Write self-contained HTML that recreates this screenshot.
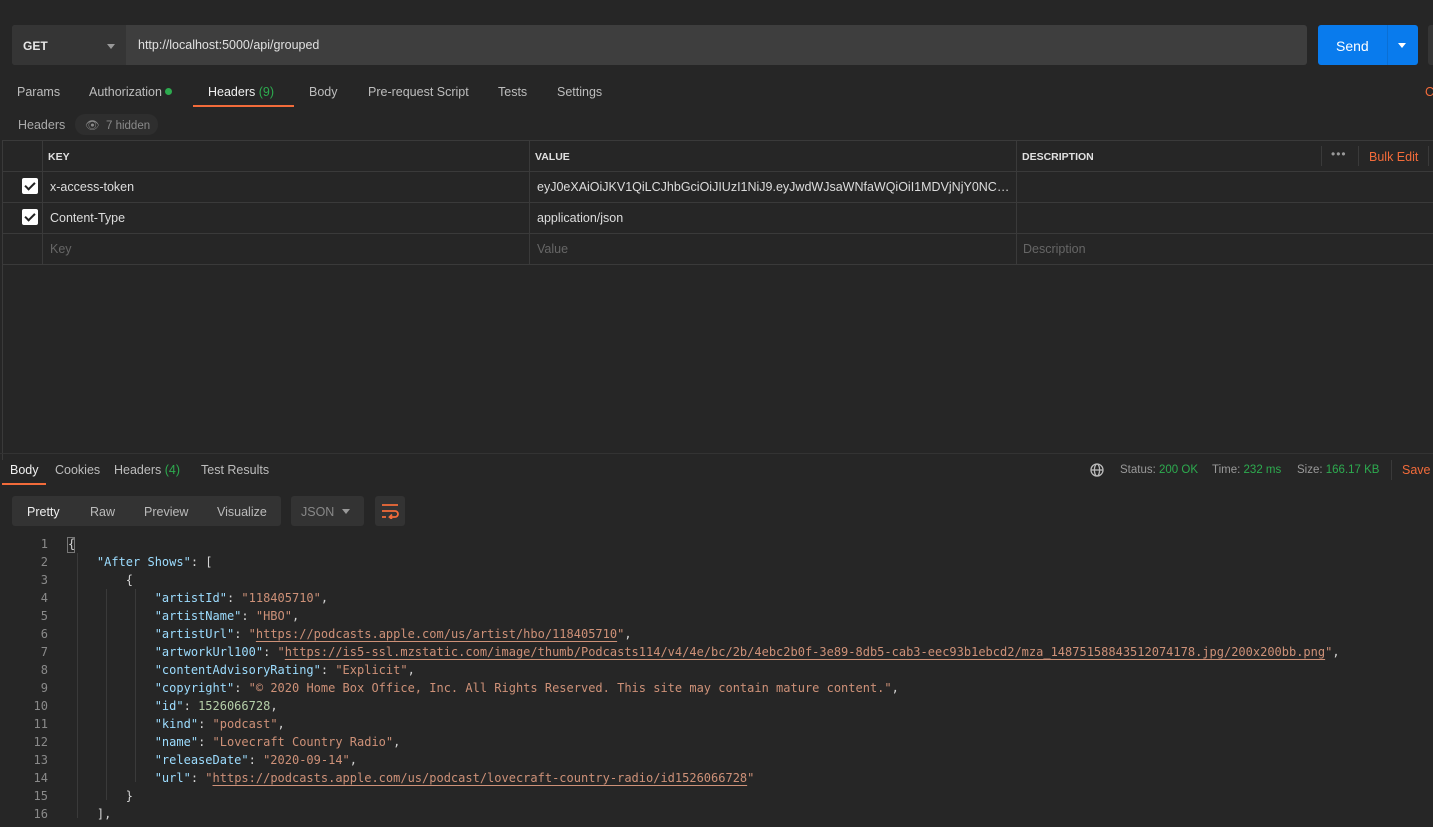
<!DOCTYPE html>
<html><head><meta charset="utf-8"><style>
*{box-sizing:border-box;margin:0;padding:0}
body{width:1433px;height:827px;background:#262626;font-family:"Liberation Sans",sans-serif;color:#d0d0d0;position:relative;overflow:hidden;font-size:12px}
.a{position:absolute;white-space:nowrap}
.hl{position:absolute;background:#3a3a3a;height:1px}
.vl{position:absolute;background:#3a3a3a;width:1px}
.code{position:absolute;left:0;top:535px;font-family:"DejaVu Sans Mono","Liberation Mono",monospace;font-size:12px;line-height:18px}
.ln{position:absolute;width:48px;text-align:right;color:#8a8a8a}
.cl{position:absolute;left:68px;white-space:pre;color:#d4d4d4}
.k{color:#9cdcfe}.s{color:#ce9178}.n{color:#b5cea8}
.u{text-decoration:underline;text-underline-offset:3px}
.chk{position:absolute;left:22px;width:16px;height:16px;background:#fff;border-radius:2px}
.chk:after{content:"";position:absolute;left:5px;top:2px;width:4px;height:8px;border:solid #222;border-width:0 2px 2px 0;transform:rotate(45deg)}
</style></head><body>
<div class="a" style="left:12px;top:25px;width:1295px;height:40px;background:#3e3e3e;border-radius:3px"></div>
<div class="a" style="left:12px;top:25px;width:114px;height:40px;background:#353535;border-radius:3px 0 0 3px"></div>
<div class="a" style="left:23px;top:39px;font-weight:bold;color:#e8e8e8;font-size:12px">GET</div>
<div class="a" style="left:107px;top:44px;border:4px solid transparent;border-top:5px solid #999"></div>
<div class="a" style="left:138px;top:38px;color:#e0e0e0;font-size:12.5px">http://localhost:5000/api/grouped</div>
<div class="a" style="left:1318px;top:25px;width:100px;height:40px;background:#097bed;border-radius:3px"></div>
<div class="a" style="left:1387px;top:25px;width:1px;height:40px;background:#0a6fd4"></div>
<div class="a" style="left:1336px;top:38px;color:#fff;font-size:14px">Send</div>
<div class="a" style="left:1398px;top:43px;border:4px solid transparent;border-top:5px solid #fff"></div>
<div class="a" style="left:1428px;top:25px;width:5px;height:40px;background:#353535;border-radius:3px 0 0 3px"></div>
<div class="a" style="left:17px;top:85px;color:#bdbdbd;font-size:12.5px">Params</div>
<div class="a" style="left:89px;top:85px;color:#bdbdbd;font-size:12.5px">Authorization <span style="display:inline-block;width:7px;height:7px;border-radius:50%;background:#2dab4f;vertical-align:1px"></span></div>
<div class="a" style="left:208px;top:85px;color:#f0f0f0;font-size:12.5px">Headers <span style="color:#2dab4f">(9)</span></div>
<div class="a" style="left:193px;top:105px;width:101px;height:2px;background:#f26b3a"></div>
<div class="a" style="left:309px;top:85px;color:#bdbdbd;font-size:12.5px">Body</div>
<div class="a" style="left:368px;top:85px;color:#bdbdbd;font-size:12.5px">Pre-request Script</div>
<div class="a" style="left:498px;top:85px;color:#bdbdbd;font-size:12.5px">Tests</div>
<div class="a" style="left:557px;top:85px;color:#bdbdbd;font-size:12.5px">Settings</div>
<div class="a" style="left:1425px;top:85px;color:#f26b3a;font-size:12.5px">C</div>
<div class="a" style="left:18px;top:118px;color:#aaa;font-size:12.5px">Headers</div>
<div class="a" style="left:75px;top:114px;width:83px;height:21px;background:#2e2e2e;border-radius:10px"></div>
<div class="a" style="left:85px;top:118px;color:#8a8a8a;font-size:11.5px">👁&nbsp; 7 hidden</div>
<div class="hl" style="left:2px;top:140px;width:1431px"></div>
<div class="hl" style="left:2px;top:171px;width:1431px"></div>
<div class="hl" style="left:2px;top:202px;width:1431px"></div>
<div class="hl" style="left:2px;top:233px;width:1431px"></div>
<div class="hl" style="left:2px;top:264px;width:1431px"></div>
<div class="vl" style="left:2px;top:140px;height:320px"></div>
<div class="vl" style="left:42px;top:140px;height:124px"></div>
<div class="vl" style="left:529px;top:140px;height:124px"></div>
<div class="vl" style="left:1016px;top:140px;height:124px"></div>
<div class="vl" style="left:1321px;top:146px;height:20px"></div>
<div class="vl" style="left:1358px;top:146px;height:20px"></div>
<div class="vl" style="left:1428px;top:146px;height:20px"></div>
<div class="a" style="left:48px;top:151px;font-weight:bold;font-size:10.5px;color:#e0e0e0">KEY</div>
<div class="a" style="left:535px;top:151px;font-weight:bold;font-size:10.5px;color:#e0e0e0">VALUE</div>
<div class="a" style="left:1022px;top:151px;font-weight:bold;font-size:10.5px;color:#e0e0e0">DESCRIPTION</div>
<div class="a" style="left:1331px;top:147px;color:#999;font-size:12px;letter-spacing:1px">•••</div>
<div class="a" style="left:1369px;top:150px;color:#f26b3a;font-size:12.5px">Bulk Edit</div>
<div class="chk" style="top:178px"></div>
<div class="chk" style="top:209px"></div>
<div class="a" style="left:50px;top:180px;color:#ddd;font-size:12.5px">x-access-token</div>
<div class="a" style="left:537px;top:180px;color:#ddd;font-size:12.5px;width:475px;overflow:hidden;text-overflow:ellipsis">eyJ0eXAiOiJKV1QiLCJhbGciOiJIUzI1NiJ9.eyJwdWJsaWNfaWQiOiI1MDVjNjY0NC1jYzNhNmQ</div>
<div class="a" style="left:50px;top:211px;color:#ddd;font-size:12.5px">Content-Type</div>
<div class="a" style="left:537px;top:211px;color:#ddd;font-size:12.5px">application/json</div>
<div class="a" style="left:50px;top:242px;color:#666;font-size:12.5px">Key</div>
<div class="a" style="left:537px;top:242px;color:#666;font-size:12.5px">Value</div>
<div class="a" style="left:1023px;top:242px;color:#666;font-size:12.5px">Description</div>
<div class="hl" style="left:0;top:453px;width:1433px;background:#333"></div>
<div class="a" style="left:10px;top:463px;color:#f0f0f0;font-size:12.5px">Body</div>
<div class="a" style="left:2px;top:483px;width:44px;height:2px;background:#f26b3a"></div>
<div class="a" style="left:55px;top:463px;color:#bdbdbd;font-size:12.5px">Cookies</div>
<div class="a" style="left:114px;top:463px;color:#bdbdbd;font-size:12.5px">Headers <span style="color:#2dab4f">(4)</span></div>
<div class="a" style="left:201px;top:463px;color:#bdbdbd;font-size:12.5px">Test Results</div>
<svg class="a" style="left:1090px;top:463px" width="14" height="14" viewBox="0 0 14 14" fill="none" stroke="#bbb" stroke-width="1.3"><circle cx="7" cy="7" r="6"/><ellipse cx="7" cy="7" rx="2.6" ry="6"/><path d="M1 7h12"/></svg>
<div class="a" style="left:1120px;top:464px;font-size:11.5px;color:#999">Status: <span style="color:#2dab4f">200 OK</span></div>
<div class="a" style="left:1212px;top:464px;font-size:11.5px;color:#999">Time: <span style="color:#2dab4f">232 ms</span></div>
<div class="a" style="left:1297px;top:464px;font-size:11.5px;color:#999">Size: <span style="color:#2dab4f">166.17 KB</span></div>
<div class="vl" style="left:1391px;top:460px;height:20px"></div>
<div class="a" style="left:1402px;top:463px;color:#f26b3a;font-size:12.5px">Save</div>
<div class="a" style="left:12px;top:496px;width:269px;height:30px;background:#333;border-radius:3px"></div>
<div class="a" style="left:27px;top:505px;color:#eee;font-size:12.5px">Pretty</div>
<div class="a" style="left:90px;top:505px;color:#bbb;font-size:12.5px">Raw</div>
<div class="a" style="left:144px;top:505px;color:#bbb;font-size:12.5px">Preview</div>
<div class="a" style="left:217px;top:505px;color:#bbb;font-size:12.5px">Visualize</div>
<div class="a" style="left:291px;top:496px;width:73px;height:30px;background:#333;border-radius:3px"></div>
<div class="a" style="left:301px;top:505px;color:#888;font-size:12.5px">JSON</div>
<div class="a" style="left:342px;top:509px;border:4px solid transparent;border-top:5px solid #999"></div>
<div class="a" style="left:375px;top:496px;width:30px;height:30px;background:#333;border-radius:3px"></div>
<svg class="a" style="left:381px;top:503px" width="18" height="16" viewBox="0 0 18 16" fill="none" stroke="#f26b3a" stroke-width="1.8"><path d="M1 2h16M1 8h13a3 3 0 0 1 0 6h-5M1 14h4M11 11.5l-2.5 2.5 2.5 2"/></svg>
<div class="a" style="left:67px;top:537px;width:8px;height:16px;border:1px solid #777"></div>
<div class="vl" style="left:77px;top:553px;height:265px;background:#3a3a3a"></div>
<div class="vl" style="left:106px;top:589px;height:211px;background:#3a3a3a"></div>
<div class="vl" style="left:135px;top:589px;height:193px;background:#3a3a3a"></div>
<div class="code">
<div class="ln" style="top:0">1</div><div class="cl" style="top:0">{</div>
<div class="ln" style="top:18px">2</div><div class="cl" style="top:18px">    <span class="k">"After Shows"</span>: [</div>
<div class="ln" style="top:36px">3</div><div class="cl" style="top:36px">        {</div>
<div class="ln" style="top:54px">4</div><div class="cl" style="top:54px">            <span class="k">"artistId"</span>: <span class="s">"118405710"</span>,</div>
<div class="ln" style="top:72px">5</div><div class="cl" style="top:72px">            <span class="k">"artistName"</span>: <span class="s">"HBO"</span>,</div>
<div class="ln" style="top:90px">6</div><div class="cl" style="top:90px">            <span class="k">"artistUrl"</span>: <span class="s">"<span class="u">https://podcasts.apple.com/us/artist/hbo/118405710</span>"</span>,</div>
<div class="ln" style="top:108px">7</div><div class="cl" style="top:108px">            <span class="k">"artworkUrl100"</span>: <span class="s">"<span class="u">https://is5-ssl.mzstatic.com/image/thumb/Podcasts114/v4/4e/bc/2b/4ebc2b0f-3e89-8db5-cab3-eec93b1ebcd2/mza_14875158843512074178.jpg/200x200bb.png</span>"</span>,</div>
<div class="ln" style="top:126px">8</div><div class="cl" style="top:126px">            <span class="k">"contentAdvisoryRating"</span>: <span class="s">"Explicit"</span>,</div>
<div class="ln" style="top:144px">9</div><div class="cl" style="top:144px">            <span class="k">"copyright"</span>: <span class="s">"© 2020 Home Box Office, Inc. All Rights Reserved. This site may contain mature content."</span>,</div>
<div class="ln" style="top:162px">10</div><div class="cl" style="top:162px">            <span class="k">"id"</span>: <span class="n">1526066728</span>,</div>
<div class="ln" style="top:180px">11</div><div class="cl" style="top:180px">            <span class="k">"kind"</span>: <span class="s">"podcast"</span>,</div>
<div class="ln" style="top:198px">12</div><div class="cl" style="top:198px">            <span class="k">"name"</span>: <span class="s">"Lovecraft Country Radio"</span>,</div>
<div class="ln" style="top:216px">13</div><div class="cl" style="top:216px">            <span class="k">"releaseDate"</span>: <span class="s">"2020-09-14"</span>,</div>
<div class="ln" style="top:234px">14</div><div class="cl" style="top:234px">            <span class="k">"url"</span>: <span class="s">"<span class="u">https://podcasts.apple.com/us/podcast/lovecraft-country-radio/id1526066728</span>"</span></div>
<div class="ln" style="top:252px">15</div><div class="cl" style="top:252px">        }</div>
<div class="ln" style="top:270px">16</div><div class="cl" style="top:270px">    ],</div>
</div>
</body></html>
